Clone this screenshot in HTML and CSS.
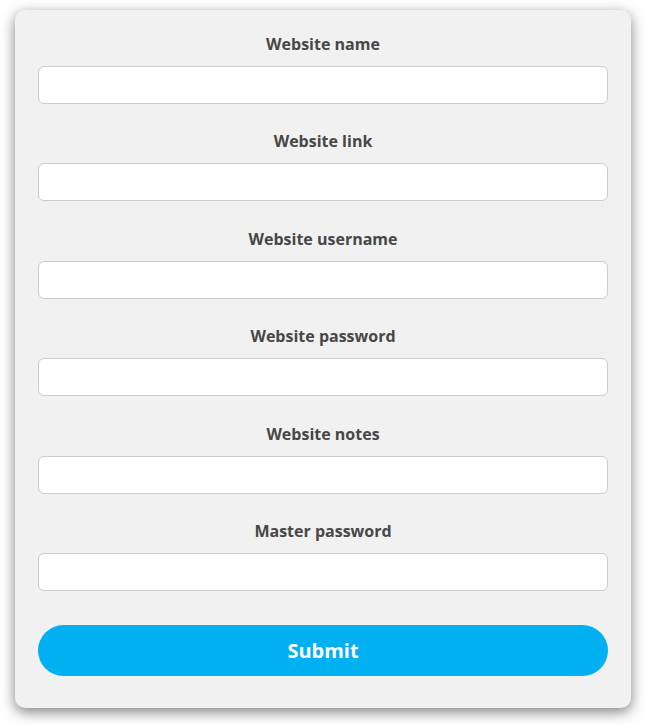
FILE: index.html
```html
<!DOCTYPE html>
<html>
<head>
<meta charset="utf-8">
<link rel="stylesheet" href="styles.css">
</head>
<body>
<form class="card">
  <div class="field"><label class="label">Website name</label><input class="input" type="text"></div>
  <div class="field"><label class="label">Website link</label><input class="input" type="text"></div>
  <div class="field"><label class="label">Website username</label><input class="input" type="text"></div>
  <div class="field"><label class="label">Website password</label><input class="input" type="text"></div>
  <div class="field"><label class="label">Website notes</label><input class="input" type="text"></div>
  <div class="field"><label class="label">Master password</label><input class="input" type="text"></div>
  <button class="submit" type="button">Submit</button>
</form>
</body>
</html>
```
FILE: styles.css
```css
html, body {
  margin: 0;
  padding: 0;
  background: #ffffff;
}
body {
  padding: 10px 14px 17px 15px;
  font-family: "Open Sans", "Liberation Sans", sans-serif;
}
.card {
  box-sizing: border-box;
  width: 616px;
  height: 698px;
  background: #f1f1f1;
  border-radius: 10px;
  box-shadow: 0 4px 14px rgba(0, 0, 0, 0.5);
  padding: 22px 23px 32px;
  display: flex;
  flex-direction: column;
}
.field {
  display: flex;
  flex-direction: column;
  margin-bottom: 25.4px;
}
.field:nth-of-type(6) {
  margin-bottom: 34px;
}
.label {
  height: 24px;
  line-height: 24px;
  text-align: center;
  font-size: 16px;
  font-weight: 700;
  color: #474747;
  margin-bottom: 10px;
}
.input {
  box-sizing: border-box;
  height: 38px;
  width: 100%;
  border: 1px solid #cccccc;
  border-radius: 6px;
  background: #ffffff;
  margin: 0;
  padding: 0 10px;
  outline: none;
}
.submit {
  height: 51px;
  width: 100%;
  border: none;
  border-radius: 26px;
  background: #00b0f0;
  color: #ffffff;
  font-family: "Open Sans", "Liberation Sans", sans-serif;
  font-size: 20px;
  font-weight: 700;
  margin: 0;
  padding: 0;
}
```
